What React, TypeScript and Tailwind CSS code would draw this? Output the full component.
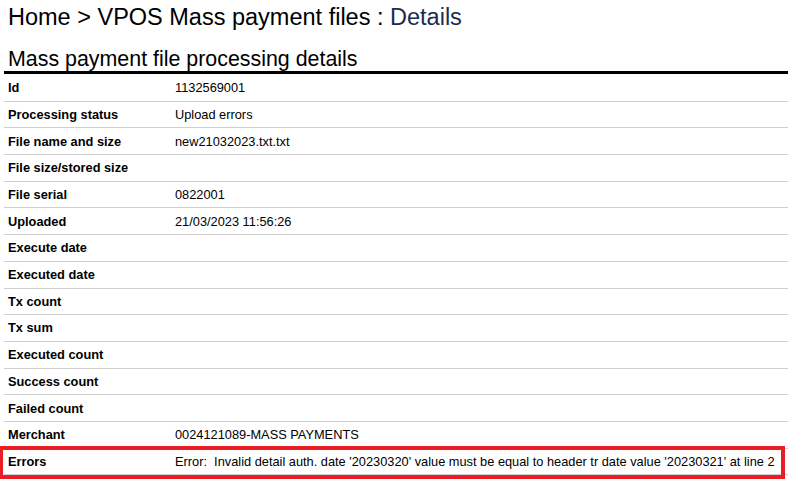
const rows: [string, string][] = [
  ["Id", "1132569001"],
  ["Processing status", "Upload errors"],
  ["File name and size", "new21032023.txt.txt"],
  ["File size/stored size", ""],
  ["File serial", "0822001"],
  ["Uploaded", "21/03/2023 11:56:26"],
  ["Execute date", ""],
  ["Executed date", ""],
  ["Tx count", ""],
  ["Tx sum", ""],
  ["Executed count", ""],
  ["Success count", ""],
  ["Failed count", ""],
  ["Merchant", "0024121089-MASS PAYMENTS"],
];

function Row({ label, value }: { label: string; value: string }) {
  return (
    <div className="flex items-center h-[26.7px] border-b border-[#d0d0d0]">
      <div className="w-[171px] pl-[4px] font-bold text-[12.8px]">{label}</div>
      <div className="whitespace-pre">{value}</div>
    </div>
  );
}

export default function App() {
  return (
    <div className="w-[802px] h-[483px] bg-white text-black overflow-hidden font-['Liberation_Sans',Arial,sans-serif]">
      <h1 className="pl-[8px] pt-[4px] text-[23.5px] leading-[27px]">
        Home &gt; VPOS Mass payment files : <span className="text-[#1b2b50]">Details</span>
      </h1>
      <div className="ml-[4px] w-[784px] mt-[17px]">
        <h2 className="pl-[4px] text-[21.4px] leading-[23px] border-b-[3px] border-black">
          Mass payment file processing details
        </h2>
        <div className="text-[12.8px] mt-[1px]">
          {rows.map(([l, v]) => (
            <Row key={l} label={l} value={v} />
          ))}
          {/* errors row, outlined in red */}
          <div className="relative">
            <Row
              label="Errors"
              value="Error:  Invalid detail auth. date '20230320' value must be equal to header tr date value '20230321' at line 2"
            />
            <div className="absolute -left-[5px] -top-[3px] w-[786px] h-[33px] border-4 border-[#ec1c24]" />
          </div>
        </div>
      </div>
    </div>
  );
}
